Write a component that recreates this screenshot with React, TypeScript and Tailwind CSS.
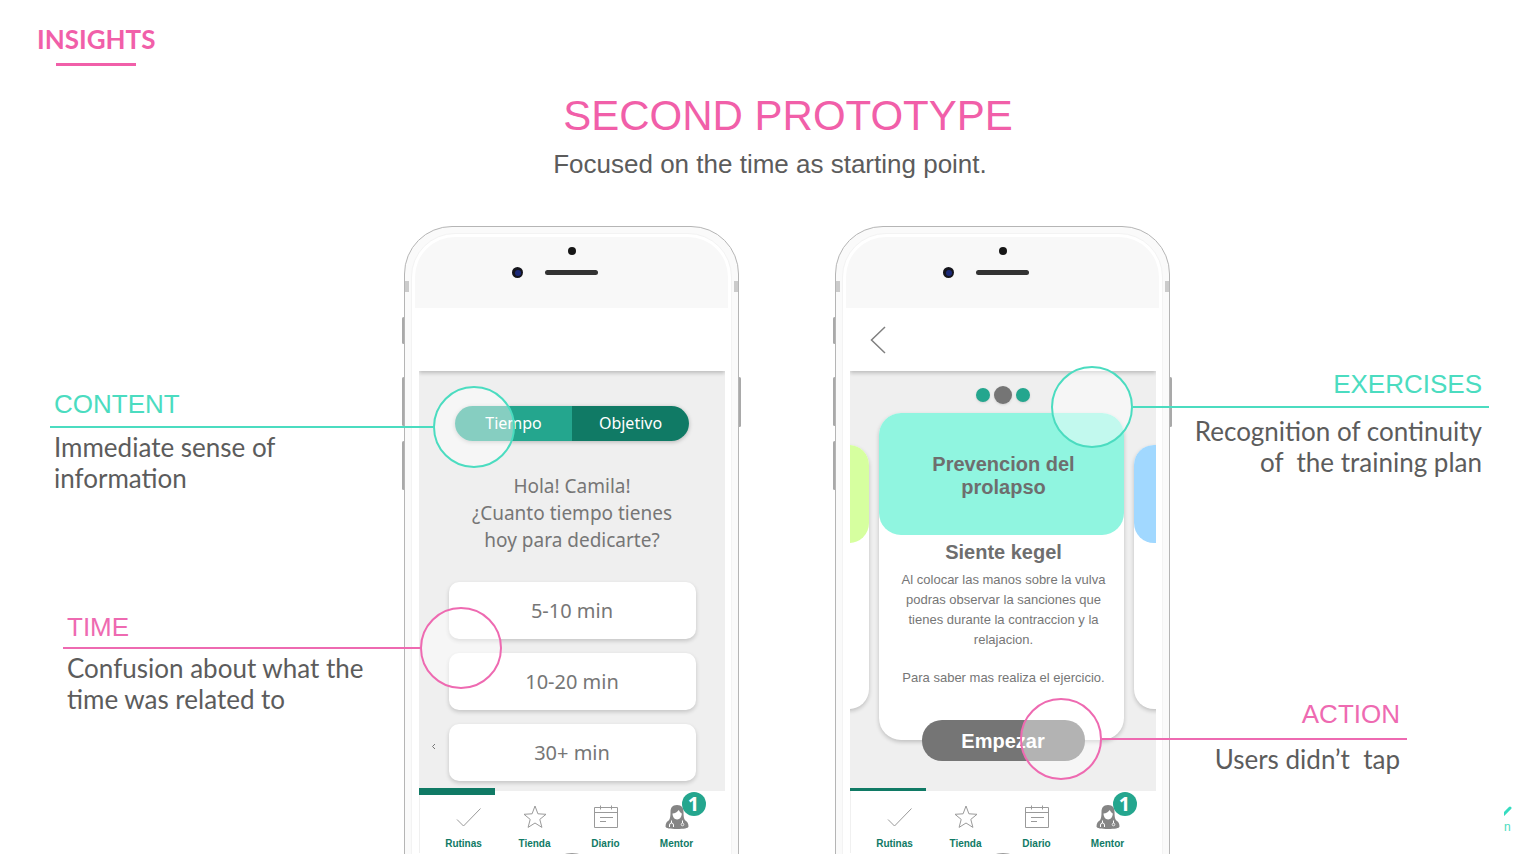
import type { ReactNode } from "react";

const sans = "font-['Liberation_Sans',Arial,sans-serif]";
const lato = "font-['Lato',sans-serif]";
const noto = "font-['Noto_Sans',sans-serif]";

type Tone = "teal" | "pink";

const tones: Record<Tone, { text: string; rule: string; ring: string }> = {
  teal: { text: "text-[#4bdcc0]", rule: "bg-[#4bdcc0]", ring: "border-[#4bdcc0]" },
  pink: { text: "text-[#ee6ab1]", rule: "bg-[#ee6ab1]", ring: "border-[#ee6ab1]" },
};

interface NoteProps {
  title: string;
  tone: Tone;
  side: "left" | "right";
  reach: string;
  className: string;
  titleGap?: string;
  bodyGap?: string;
  children: ReactNode;
}

function Note({ title, tone, side, reach, className, titleGap = "pb-1.5", bodyGap = "pt-1", children }: NoteProps) {
  const t = tones[tone];
  const isLeft = side === "left";
  const align = isLeft ? "pl-1" : "pr-[7px] text-right";
  return (
    <section className={className}>
      <h2 className={`${sans} ${t.text} ${titleGap} ${align} text-[26px] leading-8`}>{title}</h2>
      <div className={`relative h-0.5 ${t.rule}`}>
        <div
          aria-hidden="true"
          className={`absolute top-1/2 z-10 flex -translate-y-1/2 items-center ${isLeft ? "left-full" : "right-full flex-row-reverse"}`}
        >
          <span className={`h-0.5 ${reach} ${t.rule}`} />
          <span className={`size-[82px] rounded-full border-2 bg-white/45 ${t.ring}`} />
        </div>
      </div>
      <p className={`${lato} ${align} ${bodyGap} whitespace-pre-line text-[26px] leading-[31px] text-[#5c5c5c]`}>
        {children}
      </p>
    </section>
  );
}

function CheckIcon() {
  return (
    <svg viewBox="0 0 36 26" className="h-[26px] w-9" fill="none" stroke="#9a9a9a" strokeWidth="1">
      <path d="M11 15.5 17.5 22 34.5 4.5" />
    </svg>
  );
}

function StarIcon() {
  return (
    <svg viewBox="0 0 26 26" className="size-[26px]" fill="none" stroke="#9a9a9a" strokeWidth="1">
      <path d="M13 2 15.9 9.8 24 10.3 17.8 15.4 19.9 23.4 13 19 6.1 23.4 8.2 15.4 2 10.3 10.1 9.8Z" />
    </svg>
  );
}

function CalendarIcon() {
  return (
    <svg viewBox="0 0 26 26" className="size-[26px]" fill="none" stroke="#9a9a9a" strokeWidth="1">
      <path d="M1.5 3.5h23v20h-23zM1.5 8.5h23M7.5 1.500v4M18.5 1.500v4M7 13.5h13M7 17.5h6" />
    </svg>
  );
}

function MentorIcon() {
  return (
    <svg viewBox="0 0 26 26" className="size-[26px]">
      <path
        d="M13 1C8 1 6.600 4 6.500 8c0 4-.3 6.600-1.500 8.200C3 17.500 1.500 19 1.500 22.500c0 1.800 5 2.500 11.500 2.500s11.500-.7 11.500-2.500c0-3.500-1.500-5-3.500-6.300C19.800 14.600 19.500 12 19.500 8 19.400 4 18 1 13 1Z"
        fill="#858585"
      />
      <path d="M8.500 9.500c2.500-.2 5-1.500 6.300-3.500.8 1.800 2 3 3 3.500 0 3-1.900 6-4.700 6s-4.600-3-4.600-6Z" fill="#fff" />
      <path d="M7.500 16.500v2.500M5.500 23v-2a2 2 0 0 1 4 0v2M18.500 16.500v2.500" fill="none" stroke="#fff" strokeWidth="1" />
      <circle cx="18.500" cy="20.500" r="1.300" fill="none" stroke="#fff" strokeWidth=".8" />
    </svg>
  );
}

const tabs: { label: string; icon: ReactNode; badge?: string }[] = [
  { label: "Rutinas", icon: <CheckIcon /> },
  { label: "Tienda", icon: <StarIcon /> },
  { label: "Diario", icon: <CalendarIcon /> },
  { label: "Mentor", icon: <MentorIcon />, badge: "1" },
];

function TabBar({ indicator }: { indicator: string }) {
  return (
    <nav className="relative h-[62px] border-l border-[#f0f0f0] bg-white">
      <span className={`absolute -left-px bottom-full w-[76px] bg-[#107a65] ${indicator}`} />
      <ul className="grid grid-cols-4 pl-2 pr-[13px] pt-[13px]">
        {tabs.map((tab) => (
          <li key={tab.label}>
            <a href="#" className="flex flex-col items-center gap-2">
              <span className="relative">
                {tab.icon}
                {tab.badge && (
                  <span
                    className={`${noto} absolute -right-4 -top-3 flex size-6 items-center justify-center rounded-full bg-[#24a68e] text-xl font-bold leading-6 text-white`}
                  >
                    {tab.badge}
                  </span>
                )}
              </span>
              <span className={`${sans} text-[10px] font-bold leading-3 text-[#107a65]`}>{tab.label}</span>
            </a>
          </li>
        ))}
      </ul>
    </nav>
  );
}

function SideKey({ place }: { place: string }) {
  return <span className={`absolute w-[3px] rounded-sm bg-[#a9a9a9] ${place}`} />;
}

function Phone({ header, children, indicator }: { header?: ReactNode; children: ReactNode; indicator: string }) {
  return (
    <div className="relative h-[760px] w-[335px]">
      <SideKey place="-left-0.5 top-[91px] h-[27px]" />
      <SideKey place="-left-0.5 top-[151px] h-[49px]" />
      <SideKey place="-left-0.5 top-[215px] h-[49px]" />
      <SideKey place="-right-0.5 top-[151px] h-[50px]" />
      <div className="relative h-full rounded-t-[48px] border border-[#b5b5b5] bg-[#fafafa] px-1.5 pt-1.5">
        <span className="absolute left-0 top-[54px] h-[11px] w-1 bg-[#cbcbcb]" />
        <span className="absolute right-0 top-[54px] h-[11px] w-1 bg-[#cbcbcb]" />
        <div className="h-full rounded-t-[44px] border border-[#f3f3f3] bg-white px-[3px] pt-[3px]">
          <div className="rounded-t-[40px] bg-[#f8f8f8]">
            <div className="flex h-[71px] flex-col items-center pt-2.5">
              <span className="size-2 rounded-full bg-[#161616]" />
              <div className="flex w-full items-center justify-center gap-[22px] pr-[33px] pt-3">
                <span className="flex size-[11px] items-center justify-center rounded-full bg-[#15151c]">
                  <span className="size-1.5 rounded-full bg-[#1c2a78]" />
                </span>
                <span className="h-[5px] w-[53px] rounded-full bg-[#333333]" />
              </div>
            </div>
          </div>
          <div className="ml-1 mr-[3px] overflow-hidden">
            <div className="relative flex h-[63px] items-center bg-white px-5 shadow-[0_2px_4px_rgba(0,0,0,0.22)]">{header}</div>
            <main className="h-[420px] bg-[#efefef]">{children}</main>
            <TabBar indicator={indicator} />
          </div>
          <div className="mx-auto h-14 w-14 rounded-full border border-[#9a9a9a]" />
        </div>
      </div>
    </div>
  );
}

const durations = ["5-10 min", "10-20 min", "30+ min"];

function TimeScreen() {
  return (
    <div className={`${noto} relative flex flex-col items-center pt-[35px] text-[#767676]`}>
      <div className="flex w-[234px] overflow-hidden rounded-full text-base leading-[35px] text-white shadow-[0_1px_4px_rgba(0,0,0,0.25)]">
        <button type="button" className="flex-1 bg-[#24a68e]">
          Tiempo
        </button>
        <button type="button" className="flex-1 bg-[#107a65]">
          Objetivo
        </button>
      </div>
      <p className="pt-8 text-center text-[19px] leading-[27px]">
        Hola! Camila!
        <br />
        ¿Cuanto tiempo tienes
        <br />
        hoy para dedicarte?
      </p>
      <div className="flex w-[247px] flex-col gap-3.5 pt-7 text-xl leading-[57px]">
        {durations.map((duration) => (
          <button
            key={duration}
            type="button"
            className="rounded-[10px] bg-white shadow-[0_2px_4px_rgba(0,0,0,0.18)]"
          >
            {duration}
          </button>
        ))}
      </div>
      <button type="button" aria-label="Anterior" className="absolute bottom-[31px] left-3">
        <svg viewBox="0 0 5 7" className="h-[7px] w-[5px]" fill="none" stroke="#767676">
          <path d="M4 1 1.500 3.500 4 6" />
        </svg>
      </button>
    </div>
  );
}

function SideCard({ color }: { color: string }) {
  return (
    <div className="h-[264px] w-[245px] shrink-0 rounded-[20px] bg-white shadow-[0_2px_4px_rgba(0,0,0,0.2)]">
      <div className={`h-[98px] rounded-[20px] ${color}`} />
    </div>
  );
}

function RoutineScreen() {
  return (
    <div className={`${sans} flex flex-col items-center pt-[15px] text-[#6e6e6e]`}>
      <div className="flex items-center gap-1">
        <span className="size-3.5 rounded-full bg-[#24a68e] shadow-sm" />
        <span className="size-[18px] rounded-full bg-[#757575] shadow-sm" />
        <span className="size-3.5 rounded-full bg-[#24a68e] shadow-sm" />
      </div>
      <div className="flex items-center justify-center gap-2.5 pr-[3px] pt-[9px]">
        <SideCard color="bg-[#d6ff9f]" />
        <article className="h-[327px] w-[245px] shrink-0 rounded-[22px] bg-white text-center shadow-[0_2px_4px_rgba(0,0,0,0.2)]">
          <h3 className="flex h-[122px] items-center justify-center rounded-[22px] bg-[#90f5e0] pl-11 pr-10 pt-[3px] text-xl font-bold leading-[23px]">
            Prevencion del prolapso
          </h3>
          <h4 className="pl-1 pt-[5px] text-xl font-bold leading-6">Siente kegel</h4>
          <p className="pl-[18px] pr-3.5 pt-1.5 text-[13px] leading-5 text-[#767676]">
            Al colocar las manos sobre la vulva podras observar la sanciones que tienes durante la contraccion y la
            relajacion.
          </p>
          <p className="pl-1 pt-[18px] text-[13px] leading-5 text-[#767676]">Para saber mas realiza el ejercicio.</p>
        </article>
        <SideCard color="bg-[#a1d8ff]" />
      </div>
      <button
        type="button"
        className="relative -mt-5 h-[41px] w-[163px] rounded-[20px] bg-[#757575] text-xl font-bold text-white"
      >
        Empezar
      </button>
    </div>
  );
}

export default function App() {
  return (
    <div className="relative flex h-screen flex-col overflow-hidden bg-white">
      <header className="h-[226px] shrink-0">
        <div className="flex flex-col items-start px-[37px] pt-[23px]">
          <div className="flex flex-col items-center">
            <p className={`${lato} text-[26px] font-bold leading-8 text-[#f15fa9]`}>INSIGHTS</p>
            <span className="mt-2 h-[3px] w-20 bg-[#f15fa9]" />
          </div>
        </div>
        <div className={`${sans} flex flex-col items-center pl-[22px] pt-[26px]`}>
          <h1 className="pl-9 text-[42px] leading-[48px] text-[#f15fa9]">SECOND PROTOTYPE</h1>
          <p className="pt-2 text-[26px] leading-8 text-[#5c5c5c]">Focused on the time as starting point.</p>
        </div>
      </header>

      <div className="grid grid-cols-[minmax(0,404fr)_auto_minmax(0,348fr)]">
        <div className="flex flex-col">
          <Note title="CONTENT" tone="teal" side="left" reach="w-[29px]" className="pl-[50px] pt-[162px]">
            {"Immediate sense of\ninformation"}
          </Note>
          <Note title="TIME" tone="pink" side="left" reach="w-4" className="pl-[63px] pt-[117px]" titleGap="pb-1">
            {"Confusion about what the\ntime was related to"}
          </Note>
        </div>

        <div className="flex gap-24">
          <Phone indicator="h-[7px] translate-y-1">
            <TimeScreen />
          </Phone>
          <Phone
            indicator="h-[3px]"
            header={
              <button type="button" aria-label="Volver">
                <svg viewBox="0 0 16 28" className="h-7 w-4" fill="none" stroke="#808080" strokeWidth="1.500">
                  <path d="M15 1 1.500 14 15 27" />
                </svg>
              </button>
            }
          >
            <RoutineScreen />
          </Phone>
        </div>

        <div className="flex flex-col">
          <Note
            title="EXERCISES"
            tone="teal"
            side="right"
            reach="w-[37px]"
            className="pr-[29px] pt-[142px]"
            bodyGap="pt-2"
          >
            <>
              Recognition of continuity{"\n"}of&nbsp; the training plan
            </>
          </Note>
          <Note
            title="ACTION"
            tone="pink"
            side="right"
            reach="w-[68px]"
            className="pr-[111px] pt-[220px]"
            titleGap="pb-2"
          >
            Users didn’t&nbsp; tap
          </Note>
        </div>
      </div>

      <div className="absolute bottom-5 right-1.5 flex w-2 flex-col gap-1 overflow-hidden">
        <svg viewBox="0 0 8 10" className="h-2.5 w-2" fill="none" stroke="#35dcc0" strokeWidth="3" strokeLinecap="round">
          <path d="M-2 10 6 2" />
        </svg>
        <span className={`${sans} text-xs leading-[14px] text-[#4bdcc0]`}>n</span>
      </div>
    </div>
  );
}
